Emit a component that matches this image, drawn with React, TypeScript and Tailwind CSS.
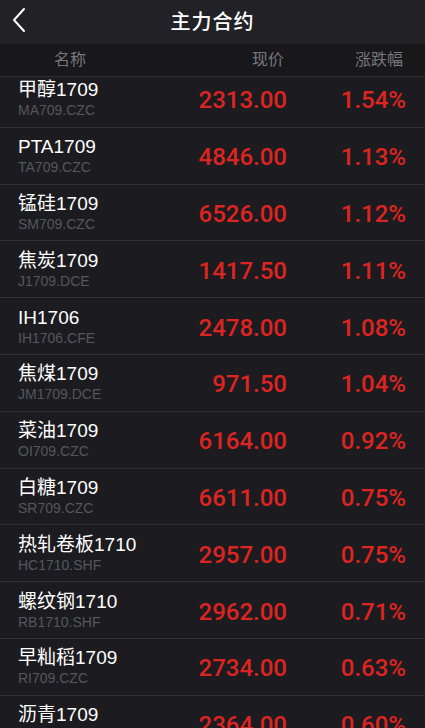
const rows = [
  { name: "甲醇1709", code: "MA709.CZC", price: "2313.00", pct: "1.54%" },
  { name: "PTA1709", code: "TA709.CZC", price: "4846.00", pct: "1.13%" },
  { name: "锰硅1709", code: "SM709.CZC", price: "6526.00", pct: "1.12%" },
  { name: "焦炭1709", code: "J1709.DCE", price: "1417.50", pct: "1.11%" },
  { name: "IH1706", code: "IH1706.CFE", price: "2478.00", pct: "1.08%" },
  { name: "焦煤1709", code: "JM1709.DCE", price: "971.50", pct: "1.04%" },
  { name: "菜油1709", code: "OI709.CZC", price: "6164.00", pct: "0.92%" },
  { name: "白糖1709", code: "SR709.CZC", price: "6611.00", pct: "0.75%" },
  { name: "热轧卷板1710", code: "HC1710.SHF", price: "2957.00", pct: "0.75%" },
  { name: "螺纹钢1710", code: "RB1710.SHF", price: "2962.00", pct: "0.71%" },
  { name: "早籼稻1709", code: "RI709.CZC", price: "2734.00", pct: "0.63%" },
  { name: "沥青1709", code: "BU1709.SHF", price: "2364.00", pct: "0.60%" },
]

const font = { fontFamily: '"Liberation Sans", "Noto Sans CJK SC", sans-serif' }
const numFont = { fontFamily: 'Roboto, "Liberation Sans", sans-serif' }

export default function App() {
  return (
    <div className="h-[728px] w-[425px] overflow-hidden flex flex-col bg-[#1c1c20]" style={font}>
      {/* title bar */}
      <div className="h-[44px] shrink-0 bg-[#222226] flex items-center relative">
        <svg className="absolute left-0 top-0" width="40" height="44" viewBox="0 0 40 44" fill="none">
          <polyline points="24,9 14,20 24,31" stroke="white" strokeWidth="2" strokeLinecap="round" strokeLinejoin="round" />
        </svg>
        <div className="flex-1 text-center text-white text-[20px] font-medium tracking-[1px]">主力合约</div>
      </div>

      {/* column header */}
      <div className="h-[33px] shrink-0 bg-[#18181b] border-b border-[#2e2e33] flex items-center text-[16px] text-[#77777c] pr-[22px] relative z-10">
        <div className="w-[140px] text-center">名称</div>
        <div className="flex-1 text-right">现价</div>
        <div className="w-[119px] text-right">涨跌幅</div>
      </div>

      {/* list, scrolled a little under the header */}
      <div className="flex-1 overflow-hidden">
        <div className="-mt-[6px]">
          {rows.map((r) => (
            <div key={r.code} className="h-[56.8px] border-b border-[#303035] flex items-center pl-[18px] pr-[19px]">
              <div className="flex-1 flex flex-col pt-[1px]">
                <div className="text-[19px] leading-[22px] text-white">{r.name}</div>
                <div className="text-[14px] leading-[18px] text-[#56565b]">{r.code}</div>
              </div>
              <div className="text-[24px] font-medium text-[#dc2420] text-right pt-[3px]" style={numFont}>{r.price}</div>
              <div className="w-[119px] text-[24px] font-medium text-[#dc2420] text-right pt-[3px]" style={numFont}>{r.pct}</div>
            </div>
          ))}
        </div>
      </div>
    </div>
  )
}
